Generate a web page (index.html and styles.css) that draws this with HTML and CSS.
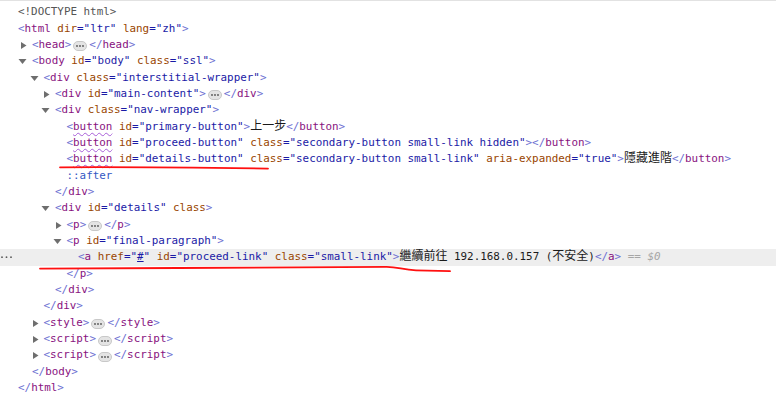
FILE: index.html
```html
<!DOCTYPE html>
<html lang="zh">
<head>
<meta charset="utf-8">
<link rel="stylesheet" href="styles.css">
</head>
<body>
<div class="tree">
  <div class="row l0"><span class="dt">&lt;!DOCTYPE html&gt;</span></div>
  <div class="row l0"><span class="br">&lt;</span><span class="tg">html</span> <span class="an">dir</span><span class="av">="ltr"</span> <span class="an">lang</span><span class="av">="zh"</span><span class="br">&gt;</span></div>
  <div class="row l1"><svg class="tw" viewBox="0 0 14 16"><polygon points="3,5 8.5,8.5 3,12"/></svg><span class="br">&lt;</span><span class="tg">head</span><span class="br">&gt;</span><svg class="ell" viewBox="0 0 14 10"><rect x="0.5" y="0.5" width="13" height="9" rx="4.5" ry="4.5"/><circle cx="4" cy="5" r="0.9"/><circle cx="7" cy="5" r="0.9"/><circle cx="10" cy="5" r="0.9"/></svg><span class="br">&lt;/</span><span class="tg">head</span><span class="br">&gt;</span></div>
  <div class="row l1"><svg class="tw" viewBox="0 0 14 16"><polygon points="0.5,6 8.5,6 4.5,11"/></svg><span class="br">&lt;</span><span class="tg">body</span> <span class="an">id</span><span class="av">="body"</span> <span class="an">class</span><span class="av">="ssl"</span><span class="br">&gt;</span></div>
  <div class="row l2"><svg class="tw" viewBox="0 0 14 16"><polygon points="0.5,6 8.5,6 4.5,11"/></svg><span class="br">&lt;</span><span class="tg">div</span> <span class="an">class</span><span class="av">="interstitial-wrapper"</span><span class="br">&gt;</span></div>
  <div class="row l3"><svg class="tw" viewBox="0 0 14 16"><polygon points="3,5 8.5,8.5 3,12"/></svg><span class="br">&lt;</span><span class="tg">div</span> <span class="an">id</span><span class="av">="main-content"</span><span class="br">&gt;</span><svg class="ell" viewBox="0 0 14 10"><rect x="0.5" y="0.5" width="13" height="9" rx="4.5" ry="4.5"/><circle cx="4" cy="5" r="0.9"/><circle cx="7" cy="5" r="0.9"/><circle cx="10" cy="5" r="0.9"/></svg><span class="br">&lt;/</span><span class="tg">div</span><span class="br">&gt;</span></div>
  <div class="row l3"><svg class="tw" viewBox="0 0 14 16"><polygon points="0.5,6 8.5,6 4.5,11"/></svg><span class="br">&lt;</span><span class="tg">div</span> <span class="an">class</span><span class="av">="nav-wrapper"</span><span class="br">&gt;</span></div>
  <div class="row l4"><span class="br">&lt;</span><span class="tg wavy">button</span> <span class="an">id</span><span class="av">="primary-button"</span><span class="br">&gt;</span><span class="tx cjk">上一步</span><span class="br">&lt;/</span><span class="tg">button</span><span class="br">&gt;</span></div>
  <div class="row l4"><span class="br">&lt;</span><span class="tg wavy">button</span> <span class="an">id</span><span class="av">="proceed-button"</span> <span class="an">class</span><span class="av">="secondary-button small-link hidden"</span><span class="br">&gt;&lt;/</span><span class="tg">button</span><span class="br">&gt;</span></div>
  <div class="row l4"><span class="br">&lt;</span><span class="tg wavy">button</span> <span class="an">id</span><span class="av">="details-button"</span> <span class="an">class</span><span class="av">="secondary-button small-link"</span> <span class="an">aria-expanded</span><span class="av">="true"</span><span class="br">&gt;</span><span class="tx cjk">隱藏進階</span><span class="br">&lt;/</span><span class="tg">button</span><span class="br">&gt;</span></div>
  <div class="row l4"><span class="ps">::after</span></div>
  <div class="row l3"><span class="br">&lt;/</span><span class="tg">div</span><span class="br">&gt;</span></div>
  <div class="row l3"><svg class="tw" viewBox="0 0 14 16"><polygon points="0.5,6 8.5,6 4.5,11"/></svg><span class="br">&lt;</span><span class="tg">div</span> <span class="an">id</span><span class="av">="details"</span> <span class="an">class</span><span class="br">&gt;</span></div>
  <div class="row l4"><svg class="tw" viewBox="0 0 14 16"><polygon points="3,5 8.5,8.5 3,12"/></svg><span class="br">&lt;</span><span class="tg">p</span><span class="br">&gt;</span><svg class="ell" viewBox="0 0 14 10"><rect x="0.5" y="0.5" width="13" height="9" rx="4.5" ry="4.5"/><circle cx="4" cy="5" r="0.9"/><circle cx="7" cy="5" r="0.9"/><circle cx="10" cy="5" r="0.9"/></svg><span class="br">&lt;/</span><span class="tg">p</span><span class="br">&gt;</span></div>
  <div class="row l4"><svg class="tw" viewBox="0 0 14 16"><polygon points="0.5,6 8.5,6 4.5,11"/></svg><span class="br">&lt;</span><span class="tg">p</span> <span class="an">id</span><span class="av">="final-paragraph"</span><span class="br">&gt;</span></div>
  <div class="row l5 sel"><svg class="gut" viewBox="0 0 14 16"><circle cx="2" cy="8.2" r="0.9"/><circle cx="6.5" cy="8.2" r="0.9"/><circle cx="11" cy="8.2" r="0.9"/></svg><span class="br">&lt;</span><span class="tg">a</span> <span class="an">href</span><span class="av">="<span class="lk">#</span>"</span> <span class="an">id</span><span class="av">="proceed-link"</span> <span class="an">class</span><span class="av">="small-link"</span><span class="br">&gt;</span><span class="tx"><span class="cjk">繼續前往</span> 192.168.0.157 (<span class="cjk">不安全</span>)</span><span class="br">&lt;/</span><span class="tg">a</span><span class="br">&gt;</span> <span class="dl">== $0</span></div>
  <div class="row l4"><span class="br">&lt;/</span><span class="tg">p</span><span class="br">&gt;</span></div>
  <div class="row l3"><span class="br">&lt;/</span><span class="tg">div</span><span class="br">&gt;</span></div>
  <div class="row l2"><span class="br">&lt;/</span><span class="tg">div</span><span class="br">&gt;</span></div>
  <div class="row l2"><svg class="tw" viewBox="0 0 14 16"><polygon points="3,5 8.5,8.5 3,12"/></svg><span class="br">&lt;</span><span class="tg">style</span><span class="br">&gt;</span><svg class="ell" viewBox="0 0 14 10"><rect x="0.5" y="0.5" width="13" height="9" rx="4.5" ry="4.5"/><circle cx="4" cy="5" r="0.9"/><circle cx="7" cy="5" r="0.9"/><circle cx="10" cy="5" r="0.9"/></svg><span class="br">&lt;/</span><span class="tg">style</span><span class="br">&gt;</span></div>
  <div class="row l2"><svg class="tw" viewBox="0 0 14 16"><polygon points="3,5 8.5,8.5 3,12"/></svg><span class="br">&lt;</span><span class="tg">script</span><span class="br">&gt;</span><svg class="ell" viewBox="0 0 14 10"><rect x="0.5" y="0.5" width="13" height="9" rx="4.5" ry="4.5"/><circle cx="4" cy="5" r="0.9"/><circle cx="7" cy="5" r="0.9"/><circle cx="10" cy="5" r="0.9"/></svg><span class="br">&lt;/</span><span class="tg">script</span><span class="br">&gt;</span></div>
  <div class="row l2"><svg class="tw" viewBox="0 0 14 16"><polygon points="3,5 8.5,8.5 3,12"/></svg><span class="br">&lt;</span><span class="tg">script</span><span class="br">&gt;</span><svg class="ell" viewBox="0 0 14 10"><rect x="0.5" y="0.5" width="13" height="9" rx="4.5" ry="4.5"/><circle cx="4" cy="5" r="0.9"/><circle cx="7" cy="5" r="0.9"/><circle cx="10" cy="5" r="0.9"/></svg><span class="br">&lt;/</span><span class="tg">script</span><span class="br">&gt;</span></div>
  <div class="row l1"><span class="br">&lt;/</span><span class="tg">body</span><span class="br">&gt;</span></div>
  <div class="row l0"><span class="br">&lt;/</span><span class="tg">html</span><span class="br">&gt;</span></div>
</div>
<svg class="marks" viewBox="0 0 776 410">
  <path d="M60,166.3 C120,166 200,166.6 268,167.6"/>
  <path d="M40,267.6 C150,267.2 300,266.4 386,265.8 C398,265.6 402,268.8 416,269.3 L450,270.2"/>
</svg>
</body>
</html>
```
FILE: styles.css
```css
html, body {
  margin: 0;
  padding: 0;
  background: #ffffff;
}
body {
  position: relative;
  width: 776px;
  height: 410px;
  overflow: hidden;
  box-sizing: border-box;
  border-top: 1px solid #e2e2e2;
  font-family: "DejaVu Sans Mono", "Liberation Mono", "Noto Sans CJK TC", monospace;
  font-size: 10.9px;
  color: #222222;
}
.tree {
  padding-top: 3.2px;
}
.row {
  position: relative;
  height: 16.35px;
  line-height: 16.35px;
  white-space: nowrap;
}
.l0 { padding-left: 18px; }
.l1 { padding-left: 32px; }
.l2 { padding-left: 43.5px; }
.l3 { padding-left: 55px; }
.l4 { padding-left: 66.5px; }
.l5 { padding-left: 78px; }
.sel {
  background: #eeeeee;
}
.tw {
  display: inline-block;
  vertical-align: top;
  width: 14px;
  height: 16px;
  margin-left: -14px;
  fill: #6e6e6e;
}
.ell {
  display: inline-block;
  vertical-align: top;
  width: 14px;
  height: 10px;
  margin: 4.5px 2px 0 2px;
}
.ell rect {
  fill: #e4e4e4;
  stroke: #c8c8c8;
  stroke-width: 1;
}
.ell circle {
  fill: #555555;
}
.gut {
  position: absolute;
  left: 0;
  top: 0;
  width: 14px;
  height: 16px;
  fill: #5a5a5a;
}
.dt { color: #555555; }
.br { color: #6d70d2; }
.tg { color: #881280; }
.an { color: #994500; }
.av { color: #1a1aa6; }
.tx { color: #1a1a1a; }
.ps { color: #3358c4; }
.lk { text-decoration: underline; }
.dl {
  color: #a6a6a6;
  font-style: italic;
}
.wavy {
  text-decoration: underline wavy #a85fd8;
  text-decoration-thickness: 1px;
  text-underline-offset: 2px;
}
.cjk {
  font-family: "Noto Sans CJK TC", "Noto Sans CJK SC", sans-serif;
  font-size: 12px;
  line-height: 12px;
}
.marks {
  position: absolute;
  left: 0;
  top: 0;
  width: 776px;
  height: 410px;
  pointer-events: none;
  fill: none;
  stroke: #ff1010;
  stroke-width: 1.8;
  stroke-linecap: round;
}
```
